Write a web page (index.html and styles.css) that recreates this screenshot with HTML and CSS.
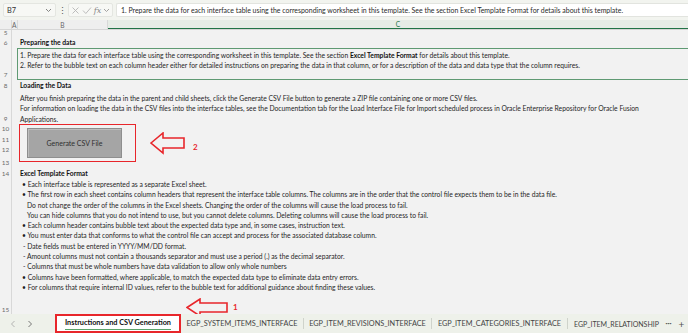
FILE: index.html
```html
<!DOCTYPE html>
<html>
<head>
<meta charset="utf-8">
<link rel="stylesheet" href="styles.css">
</head>
<body>
<div class="app">
  <div class="fbar">
    <div class="namebox"><span>B7</span>
      <svg class="chev" width="7" height="5" viewBox="0 0 7 5"><path d="M1 1 L3.5 3.5 L6 1" fill="none" stroke="#777" stroke-width="0.9"/></svg>
    </div>
    <div class="vdots">⋮</div>
    <div class="fxbox">
      <svg width="9" height="9" viewBox="0 0 9 9"><path d="M1.5 1.5 L7.5 7.5 M7.5 1.5 L1.5 7.5" stroke="#b5b5b5" stroke-width="0.9"/></svg>
      <svg width="10" height="9" viewBox="0 0 10 9"><path d="M1 4.5 L3.8 7.5 L9 1.5" fill="none" stroke="#b5b5b5" stroke-width="0.9"/></svg>
      <span class="fx">fx</span>
      <svg class="chev" width="7" height="5" viewBox="0 0 7 5"><path d="M1 1 L3.5 3.5 L6 1" fill="none" stroke="#999" stroke-width="0.9"/></svg>
    </div>
    <div class="formula">1. Prepare the data for each interface table using the corresponding worksheet in this template. See the section Excel Template Format for details about this template.</div>
  </div>

  <div class="colhead">
    <div class="ch-corner"></div>
    <div class="ch-a">A</div>
    <div class="ch-b">B</div>
    <div class="ch-c">C</div>
  </div>

  <div class="sheet">
    <div class="row r5"><div class="rn">5</div><div class="cell"></div></div>
    <div class="row r6"><div class="rn">6</div><div class="cell"><b>Preparing the data</b></div></div>
    <div class="row r7 sel"><div class="rn">7</div><div class="cell">
      <div>1. Prepare the data for each interface table using the corresponding worksheet in this template. See the section <b>Excel Template Format</b> for details about this template.</div>
      <div>2. Refer to the bubble text on each column header either for detailed instructions on preparing the data in that column, or for a description of the data and data type that the column requires.</div>
    </div></div>
    <div class="row r8"><div class="rn">8</div><div class="cell"><b>Loading the Data</b></div></div>
    <div class="row r9"><div class="rn">9</div><div class="cell">
      <div>After you finish preparing the data in the parent and child sheets, click the Generate CSV File button to generate a ZIP file containing one or more CSV files.</div>
      <div>For information on loading the data in the CSV files into the interface tables, see the Documentation tab for the Load Interface File for Import scheduled process in Oracle Enterprise Repository for Oracle Fusion</div>
      <div>Applications.</div>
    </div></div>
    <div class="row r10"><div class="rn">10</div><div class="cell"></div></div>
    <div class="row r11"><div class="rn">11</div><div class="cell"></div></div>
    <div class="row r12"><div class="rn">12</div><div class="cell"></div></div>
    <div class="row r13"><div class="rn">13</div><div class="cell"></div></div>
    <div class="row r14"><div class="rn">14</div><div class="cell"><b>Excel Template Format</b></div></div>
    <div class="row r15"><div class="rn">15</div><div class="cell">
      <div class="bl">• Each interface table is represented as a separate Excel sheet.</div>
      <div class="bl">• The first row in each sheet contains column headers that represent the interface table columns. The columns are in the order that the control file expects them to be in the data file.</div>
      <div class="ind">Do not change the order of the columns in the Excel sheets. Changing the order of the columns will cause the load process to fail.</div>
      <div class="ind">You can hide columns that you do not intend to use, but you cannot delete columns. Deleting columns will cause the load process to fail.</div>
      <div class="bl">• Each column header contains bubble text about the expected data type and, in some cases, instruction text.</div>
      <div class="bl">• You must enter data that conforms to what the control file can accept and process for the associated database column.</div>
      <div class="dash">- Date fields must be entered in YYYY/MM/DD format.</div>
      <div class="dash">- Amount columns must not contain a thousands separator and must use a period (.) as the decimal separator.</div>
      <div class="dash">- Columns that must be whole numbers have data validation to allow only whole numbers</div>
      <div class="bl">• Columns have been formatted, where applicable, to match the expected data type to eliminate data entry errors.</div>
      <div class="bl">• For columns that require internal ID values, refer to the bubble text for additional guidance about finding these values.</div>
    </div></div>

    <div class="redbox"></div>
    <div class="csvbtn">Generate CSV File</div>
    <svg class="arrow2" width="40" height="24" viewBox="0 0 40 24"><polygon points="1,11 13,1 13,6 34,6 34,16 13,16 13,21" fill="none" stroke="#e8262b" stroke-width="1.6"/></svg>
    <div class="num2">2</div>
    <svg class="arrow1" width="44" height="22" viewBox="0 0 44 22"><polygon points="1,9.5 14,1 14,5 41,5 41,14 14,14 14,18" fill="none" stroke="#e8262b" stroke-width="1.6"/></svg>
    <div class="num1">1</div>
  </div>

  <div class="tabs">
    <div class="nav">
      <svg width="6" height="8" viewBox="0 0 6 8"><path d="M4.5 1 L1.5 4 L4.5 7" fill="none" stroke="#aaa" stroke-width="0.9"/></svg>
    </div>
    <div class="nav nav2">
      <svg width="6" height="8" viewBox="0 0 6 8"><path d="M1.5 1 L4.5 4 L1.5 7" fill="none" stroke="#666" stroke-width="0.9"/></svg>
    </div>
    <div class="tab active"><span>Instructions and CSV Generation</span></div>
    <div class="tab t1">EGP_SYSTEM_ITEMS_INTERFACE</div>
    <div class="sep"></div>
    <div class="tab t2">EGP_ITEM_REVISIONS_INTERFACE</div>
    <div class="sep"></div>
    <div class="tab t3">EGP_ITEM_CATEGORIES_INTERFACE</div>
    <div class="sep"></div>
    <div class="tab last">EGP_ITEM_RELATIONSHIP</div>
    <div class="more">···</div>
    <div class="plus">+</div>
  </div>
</div>
</body>
</html>
```
FILE: styles.css
```css
* { box-sizing: border-box; }
html, body { margin: 0; padding: 0; }
body {
  width: 688px;
  height: 333px;
  overflow: hidden;
  font-family: Lato, "Liberation Sans", sans-serif;
  color: #1f1f1f;
  background: #ffffff;
}
.app { width: 688px; height: 333px; display: flex; flex-direction: column; overflow: hidden; }

/* formula bar */
.fbar {
  height: 20px;
  display: flex;
  align-items: center;
  background: #f2f4ef;
  padding: 0 0 0 3px;
  font-size: 7px;
  flex: none;
}
.namebox {
  width: 53px;
  height: 14px;
  background: #f7f8f5;
  border: 1px solid #e4e6e1;
  border-radius: 2px;
  display: flex;
  align-items: center;
  justify-content: space-between;
  padding: 0 3px 0 3px;
  color: #333;
  font-size: 7.4px;
  flex: none;
}
.vdots { width: 12px; text-align: center; color: #555; font-size: 9px; flex: none; }
.fxbox {
  width: 45px;
  height: 14px;
  display: flex;
  align-items: center;
  justify-content: space-around;
  background: #f7f8f5;
  border: 1px solid #e4e6e1;
  border-radius: 2px;
  padding: 0 1px;
  flex: none;
}
.fx { font-family: "DejaVu Serif", serif; font-style: italic; color: #888; font-size: 8px; }
.formula {
  flex: 1;
  margin-left: 3px;
  height: 14px;
  background: #ffffff;
  border: 1px solid #e2e4df;
  border-right: none;
  border-radius: 2px 0 0 2px;
  display: flex;
  align-items: center;
  padding-left: 4px;
  white-space: nowrap;
  overflow: hidden;
  color: #2a2a2a;
  font-size: 6.95px;
}

/* column headers */
.colhead {
  height: 10px;
  display: flex;
  flex: none;
  background: #eeeeee;
  font-size: 6.6px;
  color: #666;
  border-bottom: 1px solid #d6d6d6;
}
.colhead > div { display: flex; align-items: center; justify-content: center; border-right: 1px solid #d8d8d8; }
.ch-corner { width: 12px; }
.ch-a { width: 6px; justify-content: flex-start !important; }
.ch-b { width: 90px; }
.ch-c { flex: 1; color: #217346; border-bottom: 1.5px solid #217346; background: #e6ece6; border-right: none !important; }

/* sheet */
.sheet {
  position: relative;
  height: 284px;
  flex: none;
  background: #f2f2f2;
  overflow: hidden;
  font-size: 6.75px;
  line-height: 10.3px;
}
.row { display: flex; position: relative; }
.rn {
  width: 12px;
  flex: none;
  border-right: 1px solid #d8d8d8;
  display: flex;
  align-items: flex-end;
  justify-content: center;
  color: #6b6b6b;
  font-size: 6.4px;
  padding-bottom: 1px;
  line-height: 8px;
}
.cell { flex: 1; padding-left: 8px; white-space: nowrap; overflow: visible; }
.r5 { height: 5px; }
.r5 .rn { align-items: flex-start; line-height: 6px; overflow: hidden; padding: 0; }
.r6 { height: 13px; }
.r6 .cell { padding-top: 2px; }
.r7 { height: 32px; }
.r7 .cell { padding-top: 1px; }
.sel .cell { border: 1px solid #5f9a73; border-right: none; margin-left: 5px; padding-left: 2px; }
.r8 { height: 11px; }
.r8 .cell { line-height: 11px; }
.r9 { height: 33px; }
.r9 .cell { padding-top: 2px; }
.r10 { height: 10px; }
.r11 { height: 11px; }
.r12 { height: 10px; }
.r13 { height: 13px; }
.r14 { height: 11px; }
.r14 .cell { line-height: 11px; }
.r15 { height: 135px; }
.r15 .cell { padding-top: 0; }
.r15 .rn { padding-bottom: 0; }
.bl { padding-left: 2px; }
.ind { padding-left: 7px; }
.dash { padding-left: 3px; }
b { font-weight: 700; color: #111; }

.redbox {
  position: absolute;
  left: 19px;
  top: 94px;
  width: 117px;
  height: 38px;
  border: 1.6px solid #e8262b;
}
.csvbtn {
  position: absolute;
  left: 27px;
  top: 98px;
  width: 95px;
  height: 30px;
  background: #a5a5a5;
  border: 1px solid #8e8e8e;
  box-shadow: inset 1px 1px 0 #bdbdbd;
  display: flex;
  align-items: center;
  justify-content: center;
  color: #303030;
  font-size: 7px;
}
.arrow2 { position: absolute; left: 150px; top: 102px; }
.num2 { position: absolute; left: 193px; top: 112px; color: #e8262b; font-weight: 700; font-size: 8px; }
.arrow1 { position: absolute; left: 186px; top: 268px; }
.num1 { position: absolute; left: 233px; top: 272px; color: #e8262b; font-weight: 700; font-size: 8px; }

/* tabs */
.tabs {
  height: 19px;
  flex: none;
  display: flex;
  align-items: center;
  background: #eef1ea;
  font-size: 7.3px;
  color: #444;
  white-space: nowrap;
  position: relative;
}
.nav { width: 17px; flex: none; display: flex; align-items: center; justify-content: center; margin-left: 4px; }
.nav2 { margin-left: 0; margin-right: 17px; }
.tab { padding: 0; flex: none; display: flex; align-items: center; justify-content: center; height: 19px; }
.tab.active {
  background: #ffffff;
  border: 2px solid #e8262b;
  color: #111;
  font-weight: 700;
  font-size: 7.3px;
  padding: 0 4px;
  width: 126px;
}
.tab.active span { border-bottom: 1.5px solid #5aa469; line-height: 10px; padding-bottom: 1px; margin-top: 1px; }
.t1 { width: 122px; }
.t2 { width: 127px; }
.t3 { width: 135px; }
.sep { width: 1px; height: 11px; background: #cfd3cb; flex: none; }
.tab.last { width: 94px; justify-content: flex-start; padding-left: 6px; font-size: 7px; }
.more { width: 13px; flex: none; color: #555; text-align: center; font-weight: 700; }
.plus { width: 13px; flex: none; color: #555; text-align: center; font-size: 10px; }
```
